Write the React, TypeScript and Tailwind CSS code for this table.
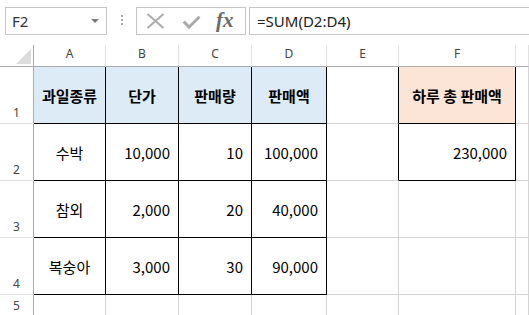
import React from "react";

const KR = { fontFamily: '"Noto Sans CJK KR", "Noto Sans", sans-serif' };
const UI = { fontFamily: '"Noto Sans", "Noto Sans CJK KR", sans-serif' };

type Cell = {
  text?: string;
  align?: "left" | "center" | "right";
  bold?: boolean;
  bg?: string;
  r?: boolean; // black right border
  b?: boolean; // black bottom border
};

const rows: Cell[][] = [
  [
    { text: "과일종류", align: "center", bold: true, bg: "bg-[#ddebf7]", r: true, b: true },
    { text: "단가", align: "center", bold: true, bg: "bg-[#ddebf7]", r: true, b: true },
    { text: "판매량", align: "center", bold: true, bg: "bg-[#ddebf7]", r: true, b: true },
    { text: "판매액", align: "center", bold: true, bg: "bg-[#ddebf7]", r: true, b: true },
    { r: true },
    { text: "하루 총 판매액", align: "center", bold: true, bg: "bg-[#fce4d6]", r: true, b: true },
    {},
  ],
  [
    { text: "수박", align: "center", r: true, b: true },
    { text: "10,000", align: "right", r: true, b: true },
    { text: "10", align: "right", r: true, b: true },
    { text: "100,000", align: "right", r: true, b: true },
    { r: true },
    { text: "230,000", align: "right", r: true, b: true },
    {},
  ],
  [
    { text: "참외", align: "center", r: true, b: true },
    { text: "2,000", align: "right", r: true, b: true },
    { text: "20", align: "right", r: true, b: true },
    { text: "40,000", align: "right", r: true, b: true },
    {},
    {},
    {},
  ],
  [
    { text: "복숭아", align: "center", r: true, b: true },
    { text: "3,000", align: "right", r: true, b: true },
    { text: "30", align: "right", r: true, b: true },
    { text: "90,000", align: "right", r: true, b: true },
    {},
    {},
    {},
  ],
  [{}, {}, {}, {}, {}, {}, {}],
];

function DataCell({ c }: { c: Cell }) {
  const cls = [
    "flex items-center border-r border-b text-[15px] text-black leading-none",
    c.r ? "border-r-black" : "border-r-[#d4d4d4]",
    c.b ? "border-b-black" : "border-b-[#d4d4d4]",
    c.bg ?? "bg-white",
    c.bold ? "font-bold" : "font-normal",
    c.align === "center" ? "justify-center" : c.align === "right" ? "justify-end pr-[8px]" : "justify-start pl-[4px]",
  ].join(" ");
  return (
    <div className={cls} style={KR}>
      {c.text ? <span className="whitespace-pre">{c.text}</span> : null}
    </div>
  );
}

export default function App() {
  const cols = ["A", "B", "C", "D", "E", "F", ""];
  return (
    <div className="w-[529px] h-[315px] overflow-hidden bg-white relative">
      {/* Toolbar / formula bar */}
      <div className="h-[45px] flex items-start pt-[7px]">
        <div className="ml-[5px] w-[102px] h-[28px] border border-[#c6c6c6] flex items-center justify-between pl-[6px] pr-[7px]">
          <span className="text-[15px] text-[#333] leading-none" style={UI}>
            F2
          </span>
          <svg width="8" height="4" viewBox="0 0 8 4">
            <polygon points="0,0 8,0 4,4" fill="#7a7a7a" />
          </svg>
        </div>
        <div className="ml-[14px] mt-[8px] flex flex-col gap-[2px]">
          <div className="w-[2px] h-[2px] bg-[#a8a8a8]" />
          <div className="w-[2px] h-[2px] bg-[#a8a8a8]" />
          <div className="w-[2px] h-[2px] bg-[#a8a8a8]" />
        </div>
        <div className="ml-[13px] w-[110px] h-[28px] border border-[#c6c6c6] flex items-center">
          <svg className="ml-[9px]" width="19" height="16" viewBox="0 0 19 16">
            <line x1="1.5" y1="1" x2="17.5" y2="15" stroke="#ababab" strokeWidth="2" />
            <line x1="17.5" y1="1" x2="1.5" y2="15" stroke="#ababab" strokeWidth="2" />
          </svg>
          <svg className="ml-[17px] mt-[2px]" width="19" height="15" viewBox="0 0 19 15">
            <path d="M0.5 7.5 L3 5.5 L7 10 L16.5 0.8 L18.5 2.8 L7 14.2 Z" fill="#ababab" />
          </svg>
          <span
            className="ml-[15px] text-[21px] italic font-bold text-[#6a6a6a] leading-none -mt-[2px]"
            style={{ fontFamily: '"Liberation Serif", serif' }}
          >
            fx
          </span>
        </div>
        <div className="ml-[3px] flex-1 h-[28px] border border-[#c6c6c6] border-r-0 flex items-center pl-[7px]">
          <span className="text-[15px] text-[#222] leading-none" style={UI}>
            =SUM(D2:D4)
          </span>
        </div>
      </div>

      {/* Grid */}
      <div className="grid grid-cols-[34px_72px_73px_73px_75px_72px_117px_1fr] grid-rows-[22px_57px_57px_57px_57px_22px]">
        {/* corner */}
        <div className="relative border-r border-r-[#ababab] border-b border-b-[#ababab] bg-white">
          <svg className="absolute right-[2px] bottom-[2px]" width="15" height="15" viewBox="0 0 15 15">
            <polygon points="15,0 15,15 0,15" fill="#dcdcdc" />
          </svg>
        </div>
        {cols.map((c, i) => (
          <div
            key={i}
            className="flex items-center justify-center pb-[3px] border-r border-r-[#e1e1e1] border-b border-b-[#ababab] bg-white text-[12px] text-[#444] leading-none"
            style={UI}
          >
            {c}
          </div>
        ))}
        {rows.map((row, ri) => (
          <React.Fragment key={ri}>
            <div
              className="flex items-end justify-center pb-[4px] border-r border-r-[#ababab] border-b border-b-[#e1e1e1] bg-white text-[12px] text-[#444] leading-none"
              style={UI}
            >
              {ri + 1}
            </div>
            {row.map((c, ci) => (
              <DataCell key={ci} c={c} />
            ))}
          </React.Fragment>
        ))}
      </div>
    </div>
  );
}
